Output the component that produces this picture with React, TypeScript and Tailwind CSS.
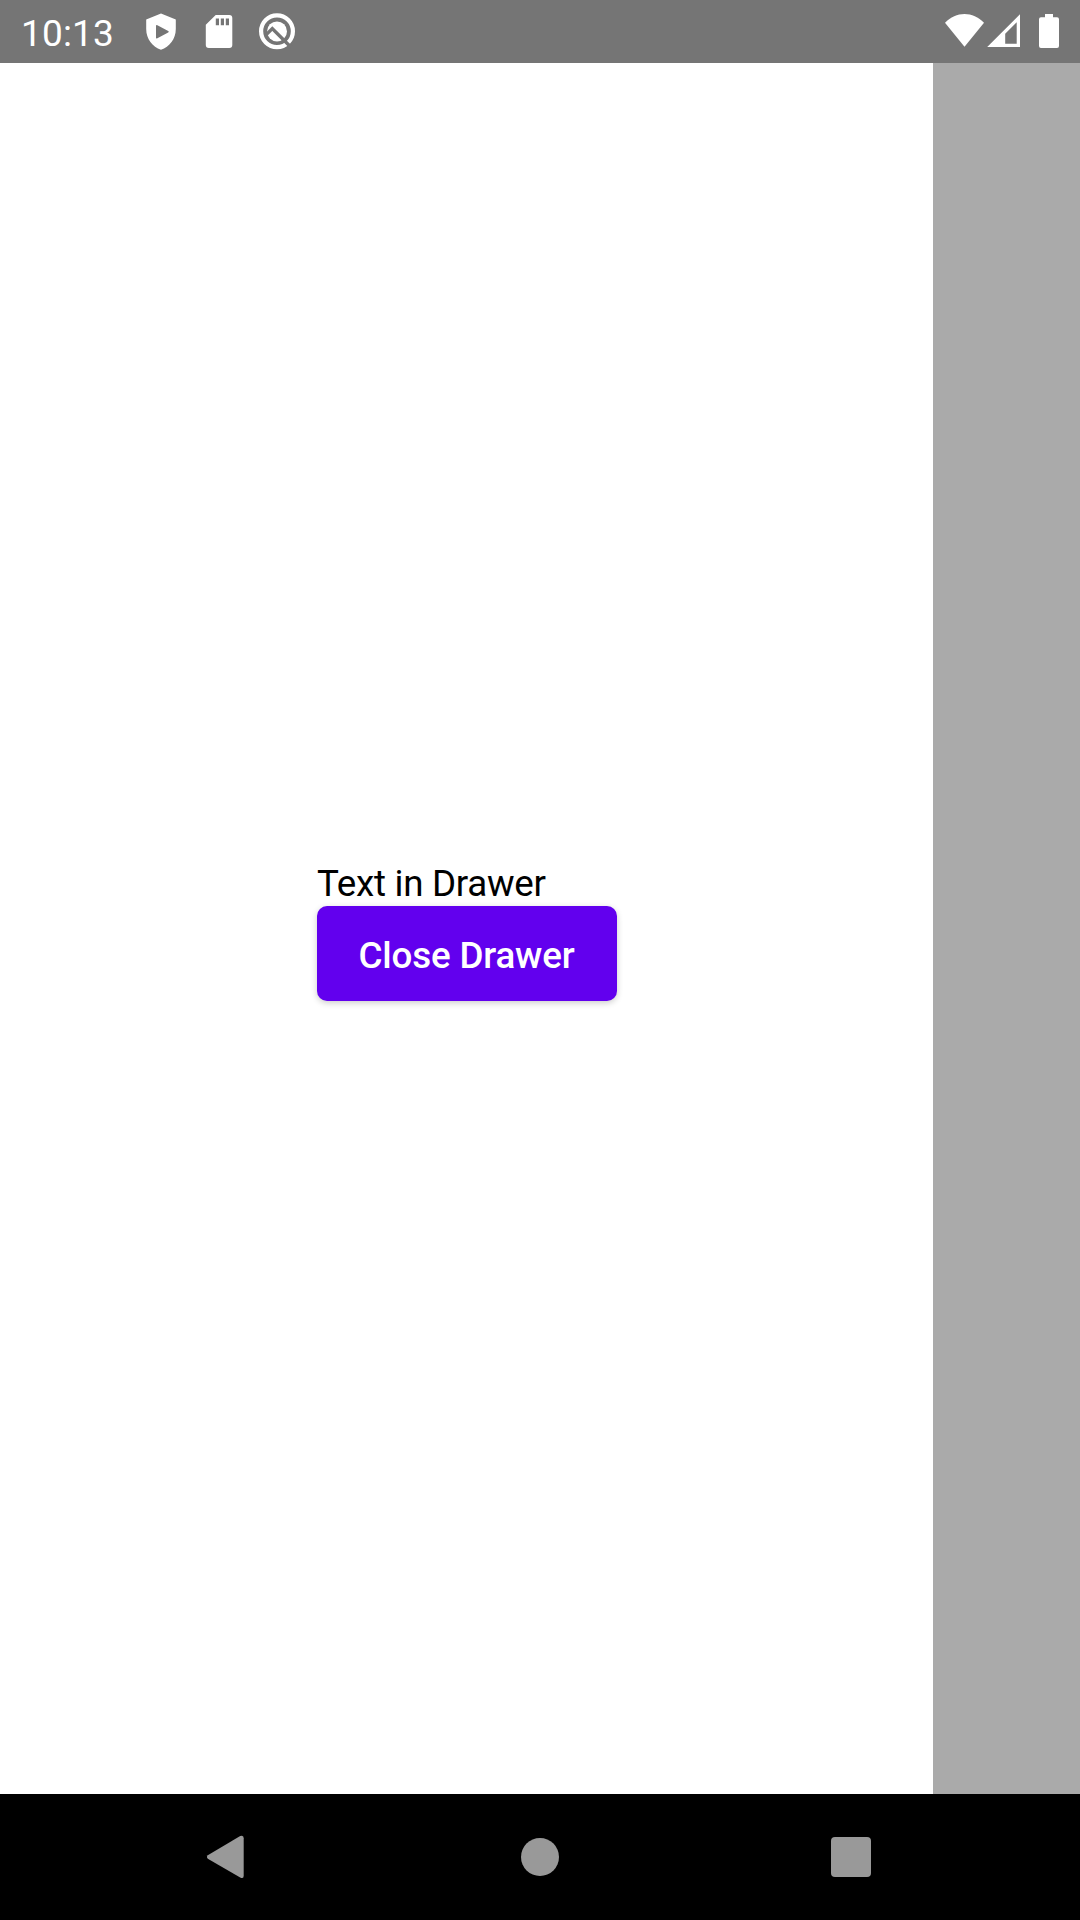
function StatusBar() {
  return (
    <header className="flex h-[63px] w-full shrink-0 items-start bg-[#757575] text-white">
      <span className="ml-[21px] mt-[12px] w-[119px] whitespace-nowrap text-[37px] leading-[43px] tracking-[0.15px]">10:13</span>
      <svg className="h-[63px] w-[40px]" viewBox="140 0 40 63" fill="currentColor">
        <path fillRule="evenodd" d="M161 13.5L175.8 19.4V29C175.8 39 169.5 46.7 161 49.8C152.5 46.7 146.2 39 146.2 29V19.4ZM157.4 25.2Q156 24.4 156 26V37.5Q156 39 157.4 38.2L168.2 32.6Q169.5 31.7 168.2 30.9Z" />
      </svg>
      <svg className="ml-[20px] h-[63px] w-[40px]" viewBox="200 0 40 63" fill="currentColor">
        <path fillRule="evenodd" d="M215.7 15H229.3Q232.3 15 232.3 18V45Q232.3 48 229.3 48H208.8Q205.8 48 205.8 45V24.7ZM215.8 18.5V25.2H219V18.5ZM220.8 18.5V25.2H224V18.5ZM225.8 18.5V25.2H229V18.5Z" />
      </svg>
      <svg className="ml-[14px] h-[63px] w-[46px]" viewBox="254 0 46 63" fill="none" stroke="currentColor">
        <circle cx="277" cy="31.3" r="15.9" strokeWidth="4.2" />
        <circle cx="277" cy="31.4" r="10" fill="currentColor" stroke="none" />
        <path stroke="#757575" strokeWidth="3.4" d="M265.5 35.4L272.3 28.6L291 47.2" />
      </svg>
      <div className="ml-auto flex">
        <svg className="h-[63px] w-[42px]" viewBox="944 0 42 63" fill="currentColor">
          <path d="M945 22.8C956 11.2 973 11.2 984 22.8L964.5 46.8Z" />
        </svg>
        <svg className="h-[63px] w-[38px]" viewBox="986 0 38 63" fill="currentColor">
          <path fillRule="evenodd" d="M1020 14.3V47H987.2ZM1016.7 22.3L1005.2 33.8V43.7H1016.7Z" />
        </svg>
        <svg className="mr-[16px] h-[63px] w-[40px]" viewBox="1024 0 40 63" fill="currentColor">
          <path d="M1045 14H1053V17.3H1057Q1059 17.3 1059 19.3V46Q1059 48 1057 48H1041Q1039 48 1039 46V19.3Q1039 17.3 1041 17.3H1045Z" />
        </svg>
      </div>
    </header>
  );
}

function NavigationBar() {
  return (
    <nav className="flex h-[126px] w-full shrink-0 items-center justify-between bg-black px-[206px] text-[#999999]">
      <svg className="h-[44px] w-[40px]" viewBox="206 1835 40 44" fill="currentColor">
        <path d="M207.8 1855.2L240.2 1836.1Q243.7 1834.7 243.7 1838.2V1875.8Q243.7 1879.3 240.2 1877.5L207.8 1858.7Q206 1857 207.8 1855.2Z" />
      </svg>
      <div className="ml-[3px] size-[38px] rounded-full bg-[#999999]" />
      <div className="mr-[3px] size-[40px] rounded-[4px] bg-[#999999]" />
    </nav>
  );
}

export default function App() {
  return (
    <div className="flex h-[1920px] w-[1080px] flex-col overflow-hidden bg-white font-[Roboto,sans-serif]">
      <StatusBar />
      <main className="flex flex-1 bg-[#aaaaaa]">
        <aside className="flex w-[933px] flex-col items-center bg-white pt-[799px]">
          <div className="flex w-[300px] flex-col">
            <p className="h-[44px] whitespace-nowrap pl-[0.5px] text-[36.75px] leading-[43px] tracking-[-0.3px] text-black">Text in Drawer</p>
            <button className="h-[95px] w-[300px] whitespace-nowrap rounded-[10px] bg-[#6200ee] pt-[3px] text-[36.75px] font-medium leading-[43px] tracking-[-0.15px] text-white shadow-[0_2px_6px_rgba(0,0,0,0.2)]">
              Close Drawer
            </button>
          </div>
        </aside>
      </main>
      <NavigationBar />
    </div>
  );
}
